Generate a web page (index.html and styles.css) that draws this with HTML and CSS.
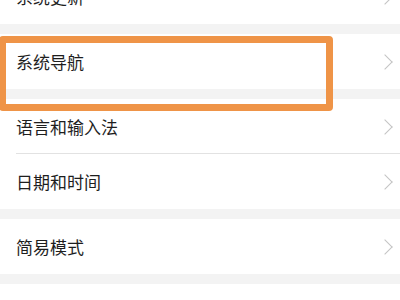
FILE: index.html
```html
<!DOCTYPE html>
<html lang="zh-CN">
<head>
  <meta charset="UTF-8">
  <meta name="viewport" content="width=device-width, initial-scale=1.0">
  <title>设置</title>
  <link rel="stylesheet" href="styles.css">
</head>
<body>
  <div id="settings">
    <div class="group first">
      <div class="item"><span>系统更新</span><i class="arrow"></i></div>
    </div>
    <div class="group">
      <div class="item"><span>系统导航</span><i class="arrow"></i></div>
    </div>
    <div class="group">
      <div class="item"><span>语言和输入法</span><i class="arrow"></i></div>
      <div class="item"><span>日期和时间</span><i class="arrow"></i></div>
    </div>
    <div class="group">
      <div class="item"><span>简易模式</span><i class="arrow"></i></div>
    </div>
    <div class="group">
      <div class="item"></div>
    </div>
    <!-- highlight over 系统导航 -->
    <div id="highlight"></div>
  </div>
</body>
</html>
```
FILE: styles.css
```css
html, body {
  margin: 0;
  padding: 0;
  width: 100%;
  height: 100%;
  overflow: hidden;
}
body {
  font-family: "Noto Sans CJK SC", "Noto Sans", sans-serif;
  background: #f3f3f3;
  color: #1e1e1e;
}
#settings {
  position: relative;
  display: flex;
  flex-direction: column;
  gap: 10px;
}
.group {
  background: #fff;
}
.group.first {
  margin-top: -31px;
}
.item {
  height: 55px;
  display: flex;
  align-items: center;
  justify-content: space-between;
  padding: 0 6px 0 16px;
  font-size: 17px;
  position: relative;
}
.item + .item::before {
  content: "";
  position: absolute;
  top: -1px;
  left: 16px;
  right: 0;
  height: 1px;
  background: #e2e2e2;
}
.arrow {
  width: 9px;
  height: 9px;
  border-top: 1.5px solid #c4c4c4;
  border-right: 1.5px solid #c4c4c4;
  transform: rotate(45deg) scale(1.1);
  margin-right: 4px;
}
#highlight {
  position: absolute;
  top: 36px;
  left: -1px;
  width: 320px;
  height: 61px;
  border: 7px solid #ef9447;
  border-radius: 4px;
}
```
